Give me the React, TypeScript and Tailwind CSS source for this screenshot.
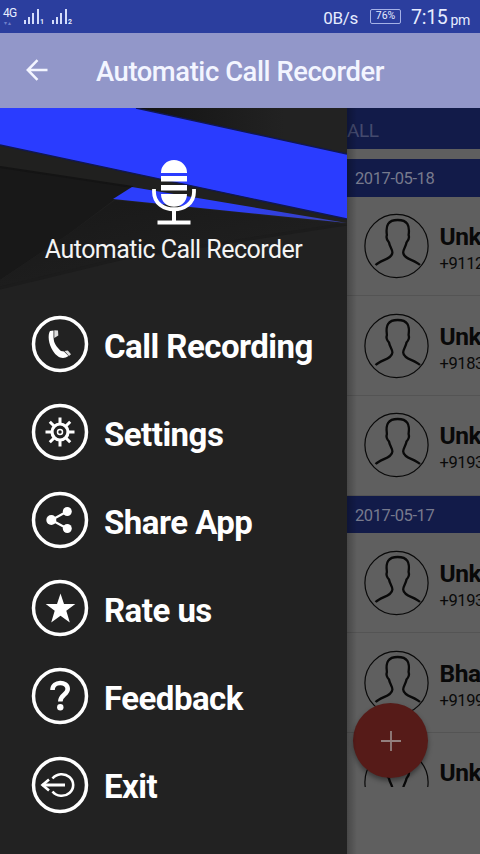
import type { ReactNode } from "react";

function Signal({ sim }: { sim: string }) {
  return (
    <div className="flex items-end">
      <svg width="16" height="16" viewBox="0 0 16 16" fill="#d4dcfb">
        <rect x="0" y="12" width="2" height="4" />
        <rect x="4" y="9" width="2" height="7" />
        <rect x="8" y="5" width="2" height="11" />
        <rect x="13" y="1" width="2" height="15" />
      </svg>
      <span className="-mb-[2px] text-[7px] leading-[7px] font-bold">{sim}</span>
    </div>
  );
}

function StatusBar() {
  return (
    <div className="flex h-[33px] shrink-0 items-center bg-[#2b3e9e] pl-[3px] pr-[10px] text-[#e6ecff]">
      <div className="flex w-[16px] flex-col">
        <span className="text-[12px] leading-[11px] tracking-[-0.8px]">4G</span>
        <span className="mt-[1px] pl-[1px] text-[6px] leading-[6px] tracking-[1px] text-[#6f80cb]">▾▴</span>
      </div>
      <div className="mt-[-1px] ml-[5px] flex gap-[8px]">
        <Signal sim="1" />
        <Signal sim="2" />
      </div>
      <span className="mt-[3px] ml-auto text-[17px] leading-none tracking-[-0.3px]">0B/s</span>
      <span className="ml-[12px] flex h-[15px] w-[31px] items-center justify-center rounded-[2px] border border-[#a5b1e6] text-[10.5px] leading-none">
        76%
      </span>
      <span className="mt-[3px] ml-[10px] text-[19.5px] leading-none tracking-[-0.3px]">7:15</span>
      <span className="ml-[3px] mt-[6px] text-[14px] leading-none tracking-[-0.3px]">pm</span>
    </div>
  );
}

function DrawerHeader() {
  return (
    <div className="relative h-[192px] shrink-0">
      <svg className="absolute inset-0" width="347" height="192" viewBox="0 0 347 192">
        <defs>
          <linearGradient id="fade" x1="0" y1="0" x2="1" y2="1">
            <stop offset="0" stopColor="#181818" />
            <stop offset="1" stopColor="#222222" />
          </linearGradient>
          <linearGradient id="dark" x1="0" y1="0" x2="1" y2="0">
            <stop offset="0" stopColor="#131313" />
            <stop offset="0.7" stopColor="#222222" />
          </linearGradient>
          <linearGradient id="thin" x1="0" y1="0" x2="1" y2="0">
            <stop offset="0.5" stopColor="#2c3efb" />
            <stop offset="1" stopColor="#3b43ae" />
          </linearGradient>
        </defs>
        <rect width="347" height="192" fill="#212121" />
        <path d="M0 59 131 79 70 125 0 172Z" fill="#181818" />
        <path d="M0 172 70 125 115 92 347 116 120 151 0 180Z" fill="url(#fade)" />
        <path d="M0 180 120 151 347 116" fill="none" stroke="#1c1c1c" strokeWidth="3" />
        <path d="M0 37 347 112V117L133 79 0 59Z" fill="#20201f" />
        <path d="M0 59 133 79" stroke="#141414" strokeWidth="2" />
        <path d="M137 0H347V46Z" fill="url(#dark)" />
        <path d="M0 0H136L347 46V111L0 37Z" fill="#2a3cff" />
        <path d="M136 0 347 46M0 37 347 111" fill="none" stroke="#101754" strokeWidth="1.4" />
        <path d="M132 79 347 115 113 91Z" fill="url(#thin)" />
      </svg>
      <div className="relative flex flex-col items-center pt-[51px]">
        <svg width="46" height="68" viewBox="0 0 46 68">
          <path d="M10 13.5a13 12.5 0 0 1 26 0V14H10ZM10 17H36V22.5H10ZM10 26H36V31.5H10ZM10 35H36C36 52 10 52 10 35Z" fill="#fff" />
          <path d="M3 30V33C3 56 43 56 43 33V30" fill="none" stroke="#fff" strokeWidth="3.8" />
          <path d="M23 50V63M6.5 63.5H39.5" fill="none" stroke="#fff" strokeWidth="4" />
        </svg>
        <div className="mt-[9px] whitespace-nowrap text-[25px] leading-[28px] tracking-[-0.53px] text-[#f4f4f4]">
          Automatic Call Recorder
        </div>
      </div>
    </div>
  );
}

function MenuItem({ label, children }: { label: string; children: ReactNode }) {
  return (
    <div className="flex h-[88.1px] items-center pl-[31px]">
      <svg width="58" height="58" viewBox="0 0 58 58" fill="none" stroke="#fff">
        <circle cx="29" cy="29" r="26.5" strokeWidth="3.5" />
        {children}
      </svg>
      <span className="ml-[15px] whitespace-nowrap pt-[4px] text-[33px] leading-none font-bold tracking-[-0.52px] text-white">
        {label}
      </span>
    </div>
  );
}

function Drawer() {
  return (
    <aside className="flex w-[347px] shrink-0 flex-col bg-[#222222]">
      <DrawerHeader />
      <nav className="flex flex-col">
        <MenuItem label="Call Recording">
          <path
            d="M19 16 22.5 15.5V22L22.8 25C23.5 29.5 27 33.5 30 36L33 36.5 37.5 41C32 45 26 42.5 22 36C17.5 29 16.5 20 19 16Z"
            fill="#fff"
            stroke="none"
          />
          <path d="M23.3 15.2 27 15.5 27.3 20.5 23.3 23ZM33.5 36 36.8 35.5 40 39.3 38 41Z" fill="#ddd" stroke="none" />
        </MenuItem>
        <MenuItem label="Settings">
          <circle cx="29" cy="29" r="8" strokeWidth="3.2" />
          <circle cx="29" cy="29" r="2.5" strokeWidth="1.5" />
          <g strokeWidth="3">
            <path d="M29 14.5V21M29 37V43.5M14.5 29H21M37 29H43.5" />
            <path d="M18.8 18.8 23.3 23.3M34.7 34.7 39.2 39.2M39.2 18.8 34.7 23.3M23.3 34.7 18.8 39.2" />
          </g>
        </MenuItem>
        <MenuItem label="Share App">
          <path d="M36 20.5 20.5 29 36 37.5" strokeWidth="2.2" />
          <g fill="#fff" stroke="none">
            <circle cx="36.3" cy="20.5" r="4.5" />
            <circle cx="20.3" cy="29" r="5" />
            <circle cx="36.3" cy="37.5" r="4.5" />
          </g>
        </MenuItem>
        <MenuItem label="Rate us">
          <path
            d="M29.5 14.5 33 25H44.3L35.3 31.8 38.8 43.5 29.5 36.8 20.2 43.5 23.7 31.8 14.7 25H26Z"
            fill="#fff"
            stroke="none"
          />
        </MenuItem>
        <MenuItem label="Feedback">
          <path d="M21.5 23C21.5 13.8 36.7 13.8 36.7 22C36.7 27.5 29.3 27.5 29.3 34.5" strokeWidth="4.6" />
          <circle cx="29.3" cy="40.3" r="3.2" fill="#fff" stroke="none" />
        </MenuItem>
        <MenuItem label="Exit">
          <path d="M21.5 22.5A11.5 10.8 0 1 1 21.5 35.5" strokeWidth="2.6" />
          <path d="M11.5 29H34" strokeWidth="3" />
          <path d="M18 23.5 11.5 29 18 34.5" strokeWidth="2.6" />
        </MenuItem>
      </nav>
    </aside>
  );
}

function Avatar() {
  return (
    <svg className="shrink-0" width="66" height="66" viewBox="0 0 66 66" fill="none" stroke="#090909">
      <circle cx="32.5" cy="33" r="31.6" strokeWidth="1.2" />
      <path
        d="M11.5 52C17.5 46.5 28.2 46 28.4 39.5C28.4 36 25.6 33.5 25 29.5C22.7 27 22 24.5 22.9 22C21.5 12.5 24 7 33.7 7C43.5 7 46 12.5 44.6 22C45.5 24.5 44.8 27 42.5 29.5C41.9 33.5 39.2 36 39.2 39.5C39.4 46 50 46.5 56 52"
        strokeWidth="2.3"
      />
    </svg>
  );
}

function Contact({ name, phone }: { name: string; phone?: string }) {
  return (
    <div className="flex h-[99.8px] shrink-0 items-center border-b border-[#545454] pl-[16.5px]">
      <Avatar />
      <div className="ml-[10px] flex h-[56px] flex-col whitespace-nowrap pt-[5px] text-[#090909]">
        <span className="text-[24.5px] leading-[28px] font-bold tracking-[-0.4px]">{name}</span>
        {phone && <span className="mt-[3px] text-[16.5px] leading-[20px] tracking-[-0.4px]">{phone}</span>}
      </div>
    </div>
  );
}

function DateBar({ date }: { date: string }) {
  return (
    <div className="flex h-[37.5px] shrink-0 items-center bg-[#121b49] pl-[8px] pt-[3px] text-[16.5px] tracking-[-0.4px] text-[#777a8d]">
      {date}
    </div>
  );
}

function CallList() {
  return (
    <main className="relative flex w-[133px] flex-col overflow-hidden bg-[#5f5f5f]">
      <div className="flex h-[41px] shrink-0 items-center bg-[#121b49] pt-[6px] text-[19px] tracking-[-0.4px] text-[#444a6e]">
        ALL
      </div>
      <div className="mt-[10px] flex h-[628px] shrink-0 flex-col overflow-hidden">
        <DateBar date="2017-05-18" />
        <Contact name="Unk" phone="+9112" />
        <Contact name="Unk" phone="+9183" />
        <Contact name="Unk" phone="+9193" />
        <DateBar date="2017-05-17" />
        <Contact name="Unk" phone="+9193" />
        <Contact name="Bha" phone="+9199" />
        <Contact name="Unk" />
      </div>
      <button className="absolute left-[6px] top-[595px] flex size-[75px] items-center justify-center rounded-full bg-[#561b18] shadow-[0_3px_5px_rgba(0,0,0,0.4)]">
        <svg width="20" height="20" viewBox="0 0 20 20" stroke="#93807e" strokeWidth="1.8">
          <path d="M10 0V20M0 10H20" />
        </svg>
      </button>
      <div className="absolute inset-y-0 left-0 w-[10px] bg-linear-to-r from-black/25 to-transparent" />
    </main>
  );
}

export default function App() {
  return (
    <div className="flex h-[854px] w-[480px] flex-col overflow-hidden bg-[#222222] font-['Roboto',sans-serif]">
      <StatusBar />
      <header className="flex h-[75px] shrink-0 items-center bg-[#9297c9] pl-[26px]">
        <svg className="-mt-[2px]" width="22" height="22" viewBox="0 0 22 22" fill="none" stroke="#f3f5ff" strokeWidth="2.5">
          <path d="M11.5 1.2 1.8 11 11.5 20.8M1.8 11H21.5" />
        </svg>
        <h1 className="ml-[48px] whitespace-nowrap pt-[5px] text-[27.4px] leading-none font-medium tracking-[-0.43px] text-[#f3f5ff]">
          Automatic Call Recorder
        </h1>
      </header>
      <div className="flex min-h-0 flex-1">
        <Drawer />
        <CallList />
      </div>
    </div>
  );
}
